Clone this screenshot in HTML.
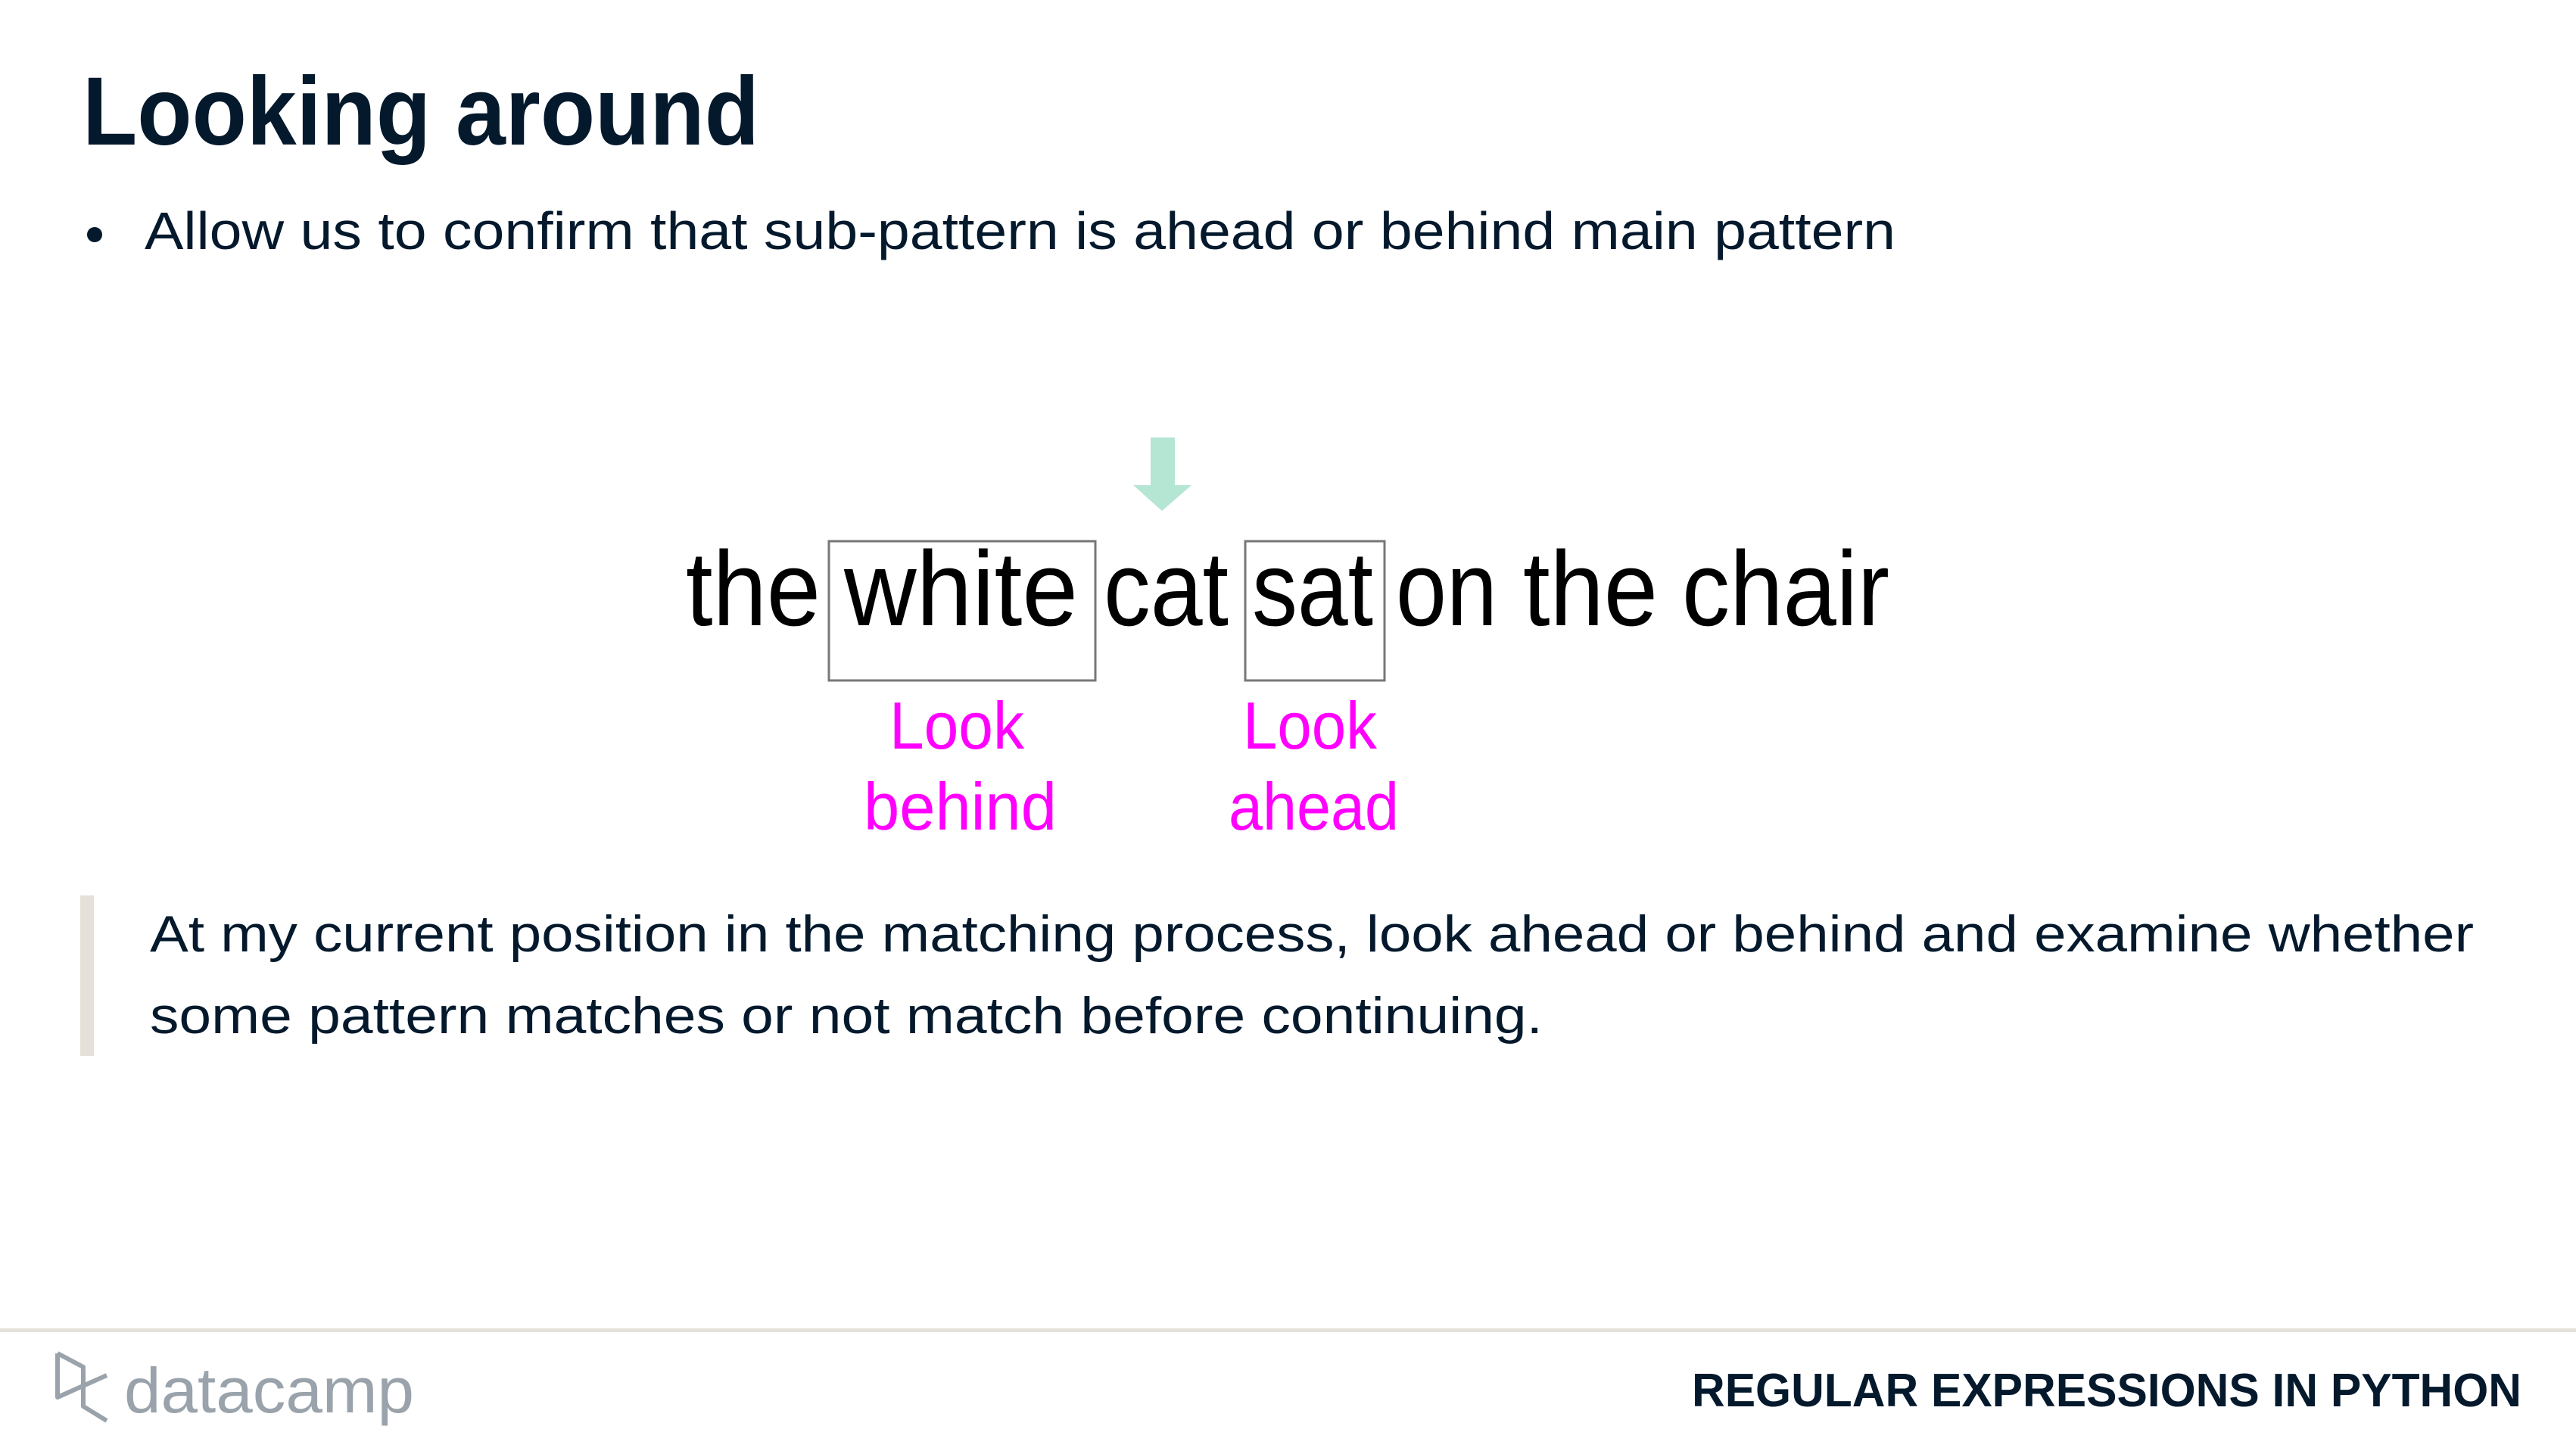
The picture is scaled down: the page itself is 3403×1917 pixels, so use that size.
<!DOCTYPE html>
<html><head><meta charset="utf-8"><style>
html,body{margin:0;padding:0;background:#fff;width:3403px;height:1917px;overflow:hidden}
svg{display:block}
text{font-family:"Liberation Sans",sans-serif}
</style></head><body>
<svg width="3403" height="1917" viewBox="0 0 3403 1917" xmlns="http://www.w3.org/2000/svg">
<text x="109" y="191" font-size="128" font-weight="bold" fill="#05192d" textLength="894" lengthAdjust="spacingAndGlyphs">Looking around</text>
<circle cx="125" cy="310" r="10" fill="#05192d"/>
<text x="191" y="329" font-size="70" fill="#05192d" textLength="2313" lengthAdjust="spacingAndGlyphs">Allow us to confirm that sub-pattern is ahead or behind main pattern</text>
<rect x="1520" y="578" width="32" height="66" fill="#b4e6d3"/>
<polygon points="1497,641 1574,641 1535,675" fill="#b4e6d3"/>
<rect x="1095" y="715" width="352" height="184" fill="none" stroke="#777" stroke-width="3"/>
<rect x="1645" y="715" width="184" height="184" fill="none" stroke="#777" stroke-width="3"/>
<g font-size="140" fill="#000">
<text x="906" y="826" textLength="178" lengthAdjust="spacingAndGlyphs">the</text>
<text x="1115" y="826" textLength="309" lengthAdjust="spacingAndGlyphs">white</text>
<text x="1458" y="826" textLength="165" lengthAdjust="spacingAndGlyphs">cat</text>
<text x="1654" y="826" textLength="160" lengthAdjust="spacingAndGlyphs">sat</text>
<text x="1844" y="826" textLength="134" lengthAdjust="spacingAndGlyphs">on</text>
<text x="2012" y="826" textLength="178" lengthAdjust="spacingAndGlyphs">the</text>
<text x="2222" y="826" textLength="274" lengthAdjust="spacingAndGlyphs">chair</text>
</g>
<g font-size="88" fill="#ff00ff">
<text x="1175" y="989" textLength="178" lengthAdjust="spacingAndGlyphs">Look</text>
<text x="1141" y="1096" textLength="255" lengthAdjust="spacingAndGlyphs">behind</text>
<text x="1642" y="989" textLength="177" lengthAdjust="spacingAndGlyphs">Look</text>
<text x="1623" y="1096" textLength="225" lengthAdjust="spacingAndGlyphs">ahead</text>
</g>
<rect x="106" y="1183" width="18" height="212" fill="#e5e1da"/>
<g font-size="68" fill="#05192d">
<text x="198" y="1257" textLength="3070" lengthAdjust="spacingAndGlyphs">At my current position in the matching process, look ahead or behind and examine whether</text>
<text x="198" y="1365" textLength="1840" lengthAdjust="spacingAndGlyphs">some pattern matches or not match before continuing.</text>
</g>
<rect x="0" y="1755" width="3403" height="5" fill="#e5e1da"/>
<g fill="none" stroke="#9aa3ab" stroke-width="6" stroke-linejoin="round">
<path d="M76 1788 L76 1846 L141 1817"/>
<path d="M76 1788 L110 1806 L110 1858 L141 1877"/>
</g>
<text x="164" y="1866" font-size="84" fill="#9aa3ab" textLength="383" lengthAdjust="spacingAndGlyphs">datacamp</text>
<text x="2235" y="1858" font-size="62" font-weight="bold" fill="#05192d" textLength="1096" lengthAdjust="spacingAndGlyphs">REGULAR EXPRESSIONS IN PYTHON</text>
</svg>
</body></html>
